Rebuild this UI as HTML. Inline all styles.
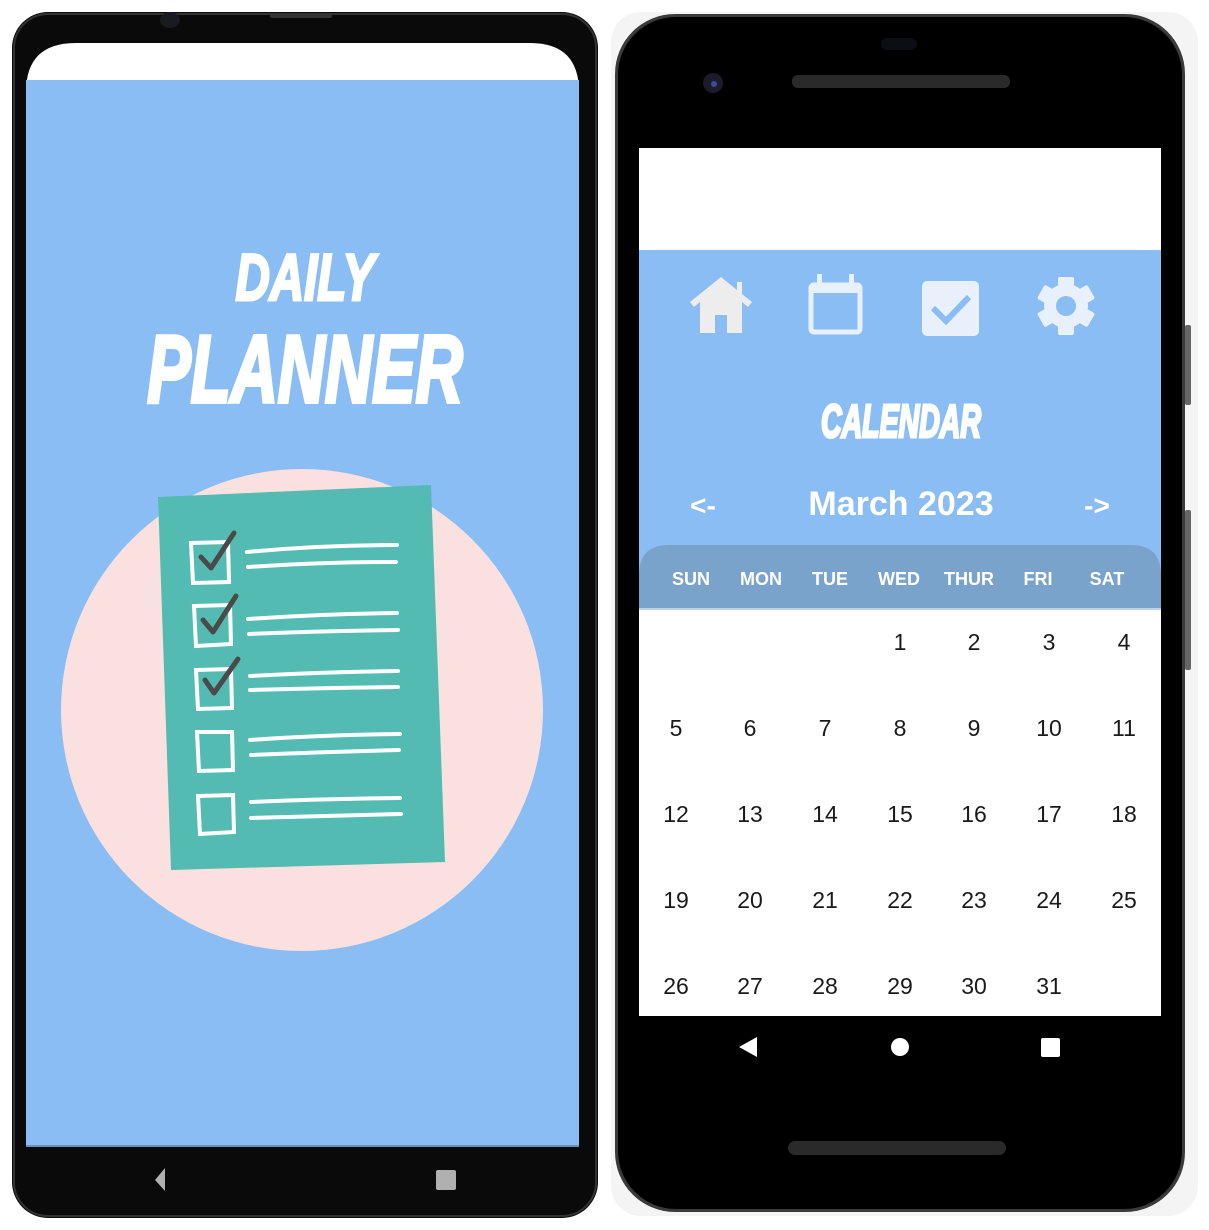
<!DOCTYPE html>
<html><head><meta charset="utf-8"><style>
html,body{margin:0;padding:0;background:#fff;width:1209px;height:1230px;overflow:hidden}
svg{display:block}
text{font-family:"Liberation Sans",sans-serif}
</style></head><body>
<svg width="1209" height="1230" viewBox="0 0 1209 1230" xmlns="http://www.w3.org/2000/svg">
<!-- LEFT PHONE -->
<rect x="12" y="12" width="586" height="1206" rx="36" fill="#0a0a0a"/>
<rect x="14" y="14" width="582" height="1202" rx="34" fill="none" stroke="#333" stroke-width="2"/>
<ellipse cx="170" cy="20" rx="10" ry="8" fill="#1a1a22"/>
<rect x="270" y="13" width="62" height="5" rx="2" fill="#333"/>
<path d="M26 1146 V92 Q26 43 76 43 H530 Q579 43 579 92 V1146 Z" fill="#fff"/>
<rect x="26" y="80" width="553" height="1066" fill="#89bdf4"/>
<rect x="26" y="1145" width="553" height="2" fill="#6a8fb8"/>
<path d="M165 1168 L155 1180 L165 1191 Z" fill="#b0b0b0"/>
<rect x="436" y="1170" width="20" height="20" rx="2" fill="#b0b0b0"/>
<text x="305" y="300" text-anchor="middle" font-size="66" font-weight="bold" font-style="italic" fill="#fff" stroke="#fff" stroke-width="3" transform="translate(305 300) scale(0.72 1) translate(-305 -300)">DAILY</text>
<text x="305" y="402" text-anchor="middle" font-size="96" font-weight="bold" font-style="italic" fill="#fff" stroke="#fff" stroke-width="4" transform="translate(305 402) scale(0.68 1) translate(-305 -402)">PLANNER</text>
<circle cx="302" cy="710" r="241" fill="#fbe0e0"/>
<polygon points="158,497 431,485 445,862 171,870" fill="#53bbb2"/>
<g fill="none" stroke="#fff" stroke-width="4" stroke-linecap="round">
<path d="M191 543 L228 542 L229 582 L193 583 Z"/>
<path d="M194 606 L230 605 L231 644 L196 646 Z"/>
<path d="M196 670 L231 669 L232 708 L198 709 Z"/>
<path d="M197 732 L232 732 L233 770 L199 771 Z"/>
<path d="M198 796 L233 795 L234 832 L200 834 Z"/>
<path d="M247 552 Q320 545 397 545 M248 567 Q320 562 396 562"/>
<path d="M248 619 Q320 614 397 613 M249 634 Q320 631 398 630"/>
<path d="M250 676 Q320 672 398 671 M250 690 Q320 688 398 687"/>
<path d="M250 740 Q320 735 400 734 M251 755 Q320 752 399 750"/>
<path d="M251 802 Q320 799 400 798 M251 818 Q320 816 401 814"/>
</g>
<g fill="none" stroke="#4a4a4a" stroke-width="5" stroke-linecap="round" stroke-linejoin="round">
<path d="M201 557 L211 568 L234 533"/>
<path d="M203 620 L213 632 L236 596"/>
<path d="M205 680 L214 693 L238 659"/>
</g>

<!-- RIGHT PHONE -->
<rect x="611" y="12" width="587" height="1204" rx="30" fill="#f4f4f4"/>
<rect x="615" y="14" width="570" height="1198" rx="60" fill="#3a3a3a"/>
<rect x="618" y="17" width="564" height="1192" rx="58" fill="#000"/>
<rect x="1185" y="325" width="6" height="80" rx="2" fill="#666"/>
<rect x="1185" y="510" width="6" height="160" rx="2" fill="#666"/>
<rect x="881" y="38" width="36" height="12" rx="6" fill="#0d0d14"/>
<circle cx="713" cy="83" r="10" fill="#1b1b2a"/><circle cx="714" cy="84" r="3" fill="#3c4aa0"/>
<rect x="792" y="75" width="218" height="13" rx="6" fill="#2a2a2a"/>
<rect x="788" y="1141" width="218" height="14" rx="7" fill="#2a2a2a"/>
<rect x="639" y="148" width="522" height="868" fill="#fff"/>
<rect x="639" y="250" width="522" height="360" fill="#89bdf4"/>
<path d="M639 610 V575 Q639 545 669 545 H1131 Q1161 545 1161 575 V610 Z" fill="#7aa3cc"/>
<rect x="639" y="608" width="522" height="2" fill="#b7d3ee"/>
<!-- icons -->
<g fill="#ededed">
<path d="M721 277 L690 302 L694 307 L700 302 L700 333 L715 333 L715 315 L727 315 L727 333 L742 333 L742 302 L748 307 L752 302 L742 294 L742 282 L737 282 L737 290 Z"/>
</g>
<g fill="none" stroke="#e8f1fb" stroke-width="5">
<rect x="811" y="285" width="49" height="47" rx="3"/>
</g>
<rect x="811" y="283" width="49" height="10" fill="#e8f1fb"/>
<rect x="817" y="274" width="5" height="12" fill="#e8f1fb"/><rect x="849" y="274" width="5" height="12" fill="#e8f1fb"/>
<rect x="922" y="281" width="57" height="55" rx="5" fill="#e8f1fb"/>
<path d="M933 308 L946 321 L969 297" fill="none" stroke="#89bdf4" stroke-width="6"/>
<g fill="#e8f1fb" transform="translate(1066 306)">
<circle r="22"/>
<rect x="-8" y="-29" width="16" height="58" rx="2"/>
<rect x="-8" y="-29" width="16" height="58" rx="2" transform="rotate(60)"/>
<rect x="-8" y="-29" width="16" height="58" rx="2" transform="rotate(120)"/>
<circle r="10" fill="#89bdf4"/>
</g>
<text x="901" y="437" text-anchor="middle" font-size="46" font-weight="bold" font-style="italic" fill="#fff" stroke="#fff" stroke-width="3" transform="translate(901 437) scale(0.62 1) translate(-901 -437)">CALENDAR</text>
<text x="703" y="515" text-anchor="middle" font-size="28" font-weight="bold" fill="#fff">&lt;-</text>
<text x="901" y="515" text-anchor="middle" font-size="34" font-weight="bold" fill="#fff">March 2023</text>
<text x="1097" y="515" text-anchor="middle" font-size="28" font-weight="bold" fill="#fff">-&gt;</text>
<g font-size="18" font-weight="bold" fill="#fff" text-anchor="middle">
<text x="691" y="585">SUN</text><text x="761" y="585">MON</text><text x="830" y="585">TUE</text><text x="899" y="585">WED</text><text x="969" y="585">THUR</text><text x="1038" y="585">FRI</text><text x="1107" y="585">SAT</text>
</g>
<g font-size="23" fill="#1a1a1a" text-anchor="middle">
<text x="900" y="650">1</text><text x="974" y="650">2</text><text x="1049" y="650">3</text><text x="1124" y="650">4</text>
<text x="676" y="736">5</text><text x="750" y="736">6</text><text x="825" y="736">7</text><text x="900" y="736">8</text><text x="974" y="736">9</text><text x="1049" y="736">10</text><text x="1124" y="736">11</text>
<text x="676" y="822">12</text><text x="750" y="822">13</text><text x="825" y="822">14</text><text x="900" y="822">15</text><text x="974" y="822">16</text><text x="1049" y="822">17</text><text x="1124" y="822">18</text>
<text x="676" y="908">19</text><text x="750" y="908">20</text><text x="825" y="908">21</text><text x="900" y="908">22</text><text x="974" y="908">23</text><text x="1049" y="908">24</text><text x="1124" y="908">25</text>
<text x="676" y="994">26</text><text x="750" y="994">27</text><text x="825" y="994">28</text><text x="900" y="994">29</text><text x="974" y="994">30</text><text x="1049" y="994">31</text>
</g>
<path d="M757 1037 L739 1047 L757 1057 Z" fill="#fff"/>
<circle cx="900" cy="1047" r="9" fill="#fff"/>
<rect x="1041" y="1038" width="19" height="19" rx="2" fill="#fff"/>
</svg>
</body></html>
